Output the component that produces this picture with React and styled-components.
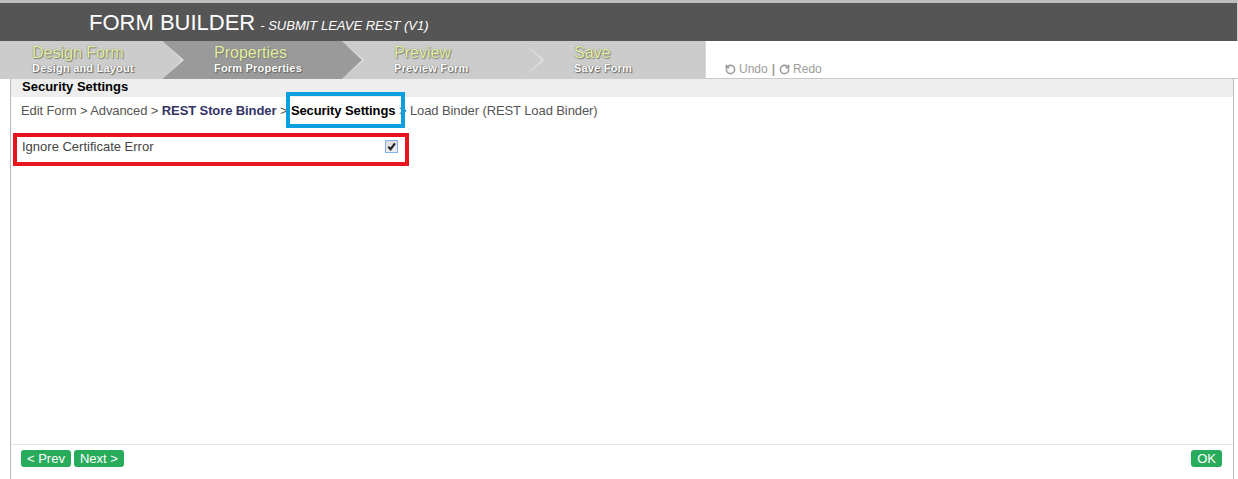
import React from "react";
import styled, { createGlobalStyle } from "styled-components";
import { RotateCcw, RotateCw } from "lucide-react";

const GlobalStyle = createGlobalStyle`
  body {
    margin: 0;
    background: #fff;
    font-family: "Liberation Sans", Arial, sans-serif;
  }
`;

const steps = [
  { title: "Design Form", sub: "Design and Layout" },
  { title: "Properties", sub: "Form Properties", active: true },
  { title: "Preview", sub: "Preview Form" },
  { title: "Save", sub: "Save Form" },
];

const App = () => {
  return (
    <Page>
      <GlobalStyle />
      <TopBar>
        <Title>FORM BUILDER</Title>
        <SubTitle>- SUBMIT LEAVE REST (V1)</SubTitle>
      </TopBar>

      <StepsRow>
        {steps.map((s, i) => (
          <Step
            key={s.title}
            $active={s.active}
            $first={i === 0}
            $last={i === steps.length - 1}
          >
            <StepTitle>{s.title}</StepTitle>
            <StepSub>{s.sub}</StepSub>
          </Step>
        ))}
        <UndoBar>
          <UndoLink>
            <RotateCcw size={11} strokeWidth={3.4} /> Undo
          </UndoLink>
          <Sep>|</Sep>
          <UndoLink>
            <RotateCw size={11} strokeWidth={3.4} /> Redo
          </UndoLink>
        </UndoBar>
      </StepsRow>

      <Panel>
        <PanelTitle>Security Settings</PanelTitle>
        <Crumbs>
          Edit Form &gt; Advanced &gt; <CrumbLink>REST Store Binder</CrumbLink>{" "}
          &gt; <CrumbCurrent>Security Settings</CrumbCurrent> &gt; Load Binder
          (REST Load Binder)
        </Crumbs>

        <FieldRow>
          <FieldLabel>Ignore Certificate Error</FieldLabel>
          <CheckBox>
            <svg width="9" height="9" viewBox="0 0 10 10">
              <path
                d="M1.4 5.2 L4 8 L8.8 1.6"
                fill="none"
                stroke="#262626"
                strokeWidth="2.4"
              />
            </svg>
          </CheckBox>
        </FieldRow>

        <Spacer />

        <Footer>
          <NavGroup>
            <GreenButton>&lt; Prev</GreenButton>
            <GreenButton>Next &gt;</GreenButton>
          </NavGroup>
          <GreenButton>OK</GreenButton>
        </Footer>
      </Panel>
    </Page>
  );
};

const Page = styled.div`
  width: 1238px;
  height: 479px;
  overflow: hidden;
`;

const TopBar = styled.div`
  height: 41px;
  box-sizing: border-box;
  border-top: 3px solid #bdbdbd;
  border-right: 1px solid #cfcfcf;
  background: #555;
  display: flex;
  align-items: baseline;
  padding: 7px 0 0 89px;
  color: #fff;
`;

const Title = styled.span`
  font-size: 22px;
`;

const SubTitle = styled.span`
  font-size: 13px;
  font-style: italic;
  margin-left: 5px;
`;

const StepsRow = styled.div`
  display: flex;
  height: 38px;
`;

const Step = styled.div`
  position: relative;
  flex: 0 0 ${(p) => (p.$first ? 162 : p.$last ? 183 : 180)}px;
  box-sizing: border-box;
  padding: 3px 0 0 ${(p) => (p.$first ? 32 : 52)}px;
  background: ${(p) => (p.$active ? "#9a9a9a" : "#cccccc")};

  &::before {
    content: "";
    display: ${(p) => (p.$last ? "none" : "block")};
    position: absolute;
    top: 0;
    left: 100%;
    width: 22px;
    height: 100%;
    background: #e4e4e4;
    clip-path: polygon(0 0, 100% 50%, 0 100%);
    z-index: 1;
  }

  &::after {
    content: "";
    display: ${(p) => (p.$last ? "none" : "block")};
    position: absolute;
    top: 0;
    left: 100%;
    width: 20px;
    height: 100%;
    background: ${(p) => (p.$active ? "#9a9a9a" : "#cccccc")};
    clip-path: polygon(0 0, 100% 50%, 0 100%);
    z-index: 2;
  }
`;

const StepTitle = styled.div`
  font-size: 16px;
  line-height: 18px;
  color: #e3f0a0;
  text-shadow: 0 0 1px #6f6f6f, 1px 1px 1px #808080;
`;

const StepSub = styled.div`
  font-size: 11px;
  font-weight: bold;
  letter-spacing: 0.2px;
  line-height: 13px;
  color: #fff;
  text-shadow: 0 0 1px #555, 1px 1px 1px #666;
`;

const UndoBar = styled.div`
  flex: 1;
  display: flex;
  align-items: flex-end;
  gap: 4px;
  padding: 0 0 2px 19px;
  background: #fff;
  border-left: 1px solid #d8d8d8;
  border-bottom: 1px solid #c8c8c8;
  font-size: 12px;
  color: #9c9c9c;
`;

const UndoLink = styled.span`
  display: flex;
  align-items: center;
  gap: 3px;
  line-height: 14px;
`;

const Sep = styled.span`
  font-weight: bold;
  line-height: 14px;
`;

const Panel = styled.div`
  margin: 0 4px 0 10px;
  height: 400px;
  border-left: 1px solid #bbb;
  border-right: 1px solid #bbb;
  display: flex;
  flex-direction: column;
`;

const PanelTitle = styled.div`
  height: 18px;
  line-height: 16px;
  padding-left: 11px;
  background: #eee;
  font-size: 13px;
  font-weight: bold;
  color: #000;
`;

const Crumbs = styled.div`
  margin-top: 6px;
  padding-left: 10px;
  font-size: 13px;
  letter-spacing: -0.1px;
  line-height: 16px;
  color: #555;
`;

const CrumbLink = styled.span`
  font-weight: bold;
  color: #333366;
`;

const CrumbCurrent = styled.span`
  position: relative;
  font-weight: bold;
  color: #000;

  &::after {
    content: "";
    position: absolute;
    top: -11px;
    bottom: -10px;
    left: -5px;
    right: -10px;
    border: 4px solid #0a9fe0;
  }
`;

const FieldRow = styled.div`
  margin: 14px 0 0 2px;
  width: 396px;
  height: 33px;
  box-sizing: border-box;
  border: 4px solid #e8141e;
  display: flex;
  align-items: center;
  justify-content: space-between;
  padding: 0 7px 7px 5px;
`;

const FieldLabel = styled.span`
  font-size: 13px;
  color: #444;
`;

const CheckBox = styled.span`
  width: 11px;
  height: 11px;
  border: 1px solid #7fb2ec;
  background: linear-gradient(#dcdcdc, #eeeeee);
  display: flex;
  align-items: center;
  justify-content: center;
  margin-top: 1px;
`;

const Spacer = styled.div`
  flex: 1;
`;

const Footer = styled.div`
  height: 35px;
  box-sizing: border-box;
  border-top: 1px solid #e6e6e6;
  padding: 5px 11px 0 10px;
  display: flex;
  justify-content: space-between;
  align-items: flex-start;
`;

const NavGroup = styled.div`
  display: flex;
  gap: 3px;
`;

const GreenButton = styled.button`
  height: 17px;
  padding: 0 6px;
  border: none;
  border-radius: 3px;
  background: #28ab5b;
  color: #fff;
  font-family: "Liberation Sans", Arial, sans-serif;
  font-size: 13px;
  line-height: 17px;
`;

export default App;
